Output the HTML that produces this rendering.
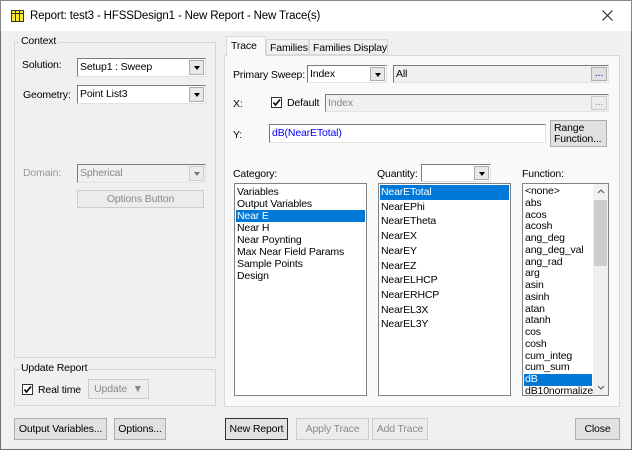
<!DOCTYPE html><html><head><style>
*{box-sizing:border-box;margin:0;padding:0}
body{width:632px;height:450px;background:#f0f0f0;font:10.5px "Liberation Sans",sans-serif;letter-spacing:-0.15px;color:#000;position:relative;overflow:hidden}
.a{position:absolute;white-space:nowrap}
.tb{position:absolute;left:0;top:0;width:632px;height:31px;background:#fff;border:1px solid #888;border-bottom:none}
.win{position:absolute;left:0;top:0;width:632px;height:450px;border:1px solid #707070;border-top:none}
.grp{position:absolute;border:1px solid #d5d5d5}
.grp>span{position:absolute;top:-8px;left:4px;background:#f0f0f0;padding:0 2px}
.in{position:absolute;background:#fff;border:1px solid #7a7a7a;border-right-color:#e3e3e3;border-bottom-color:#e3e3e3;padding:2px 2px;line-height:12px;white-space:nowrap}
.dis{background:#f0f0f0;color:#888}
.dd{position:absolute;right:1px;top:1px;bottom:1px;width:15px;background:#e8e8e8;border:1px solid #adadad}
.dd:after{content:"";position:absolute;left:4px;top:5px;border:3px solid transparent;border-top:4px solid #000}
.btn{position:absolute;background:#e1e1e1;border:1px solid #adadad;text-align:center;line-height:20px;white-space:nowrap}
.btn.d{color:#8a8a8a;background:#ececec;border-color:#ccc}
.sel{background:#0078d7;color:#fff}
.list{position:absolute;background:#fff;border:1px solid #828282;overflow:hidden;padding:1px;white-space:nowrap}
.list div{padding-left:1px}
</style></head><body>
<div class="win"></div>
<div class="tb"></div>
<svg class="a" style="left:11px;top:10px" width="13" height="12"><rect x="0.5" y="0.5" width="12" height="11" fill="#f8e830" stroke="#333"/><path d="M0 3.5H13M4.5 0V12M8.5 0V12" stroke="#333"/></svg>
<div class="a" style="left:30px;top:10px;font-size:11.5px">Report: test3 - HFSSDesign1 - New Report - New Trace(s)</div>
<svg class="a" style="left:602px;top:10px" width="11" height="11"><path d="M0.5 0.5L10.5 10.5M10.5 0.5L0.5 10.5" stroke="#222" stroke-width="1.1"/></svg>

<div class="grp" style="left:14px;top:42px;width:202px;height:316px"><span>Context</span></div>
<div class="a" style="left:22px;top:59px">Solution:</div>
<div class="in" style="left:77px;top:58px;width:129px;height:19px">Setup1 : Sweep<div class="dd"></div></div>
<div class="a" style="left:23px;top:89px">Geometry:</div>
<div class="in" style="left:77px;top:85px;width:129px;height:19px">Point List3<div class="dd"></div></div>
<div class="a" style="left:23px;top:167px;color:#999">Domain:</div>
<div class="in dis" style="left:77px;top:164px;width:129px;height:19px">Spherical<div class="dd" style="opacity:.5"></div></div>
<div class="btn d" style="left:77px;top:190px;width:127px;height:18px;line-height:16px">Options Button</div>

<div class="grp" style="left:14px;top:369px;width:202px;height:37px"><span>Update Report</span></div>
<div class="a" style="left:22px;top:384px;width:11px;height:11px;border:1px solid #333;background:#fff"><svg width="9" height="9" style="position:absolute;left:0;top:0"><path d="M1.5 4.5L3.5 7L8 1.5" stroke="#000" stroke-width="1.6" fill="none"/></svg></div>
<div class="a" style="left:38px;top:384px">Real time</div>
<div class="btn d" style="left:88px;top:379px;width:61px;height:20px;line-height:18px">Update &nbsp;&#9660;</div>
<div class="btn" style="left:14px;top:418px;width:93px;height:22px">Output Variables...</div>
<div class="btn" style="left:114px;top:418px;width:52px;height:22px">Options...</div>

<div class="a" style="left:224px;top:55px;width:396px;height:352px;border:1px solid #d9d9d9;background:#f9f9f9"></div>
<div class="a" style="left:226px;top:36px;width:40px;height:20px;border:1px solid #d9d9d9;border-bottom:none;background:#f9f9f9;padding:3px 4px">Trace</div>
<div class="a" style="left:266px;top:39px;width:43px;height:16px;border:1px solid #d9d9d9;background:#f0f0f0;padding:2px 3px">Families</div>
<div class="a" style="left:309px;top:39px;width:79px;height:16px;border:1px solid #d9d9d9;background:#f0f0f0;padding:2px 3px">Families Display</div>

<div class="a" style="left:233px;top:69px">Primary Sweep:</div>
<div class="in" style="left:307px;top:65px;width:80px;height:18px">Index<div class="dd"></div></div>
<div class="in dis" style="left:393px;top:65px;width:216px;height:18px;color:#000">All<div class="btn" style="right:1px;top:1px;width:16px;height:14px;line-height:10px;color:#00f">...</div></div>
<div class="a" style="left:233px;top:98px">X:</div>
<div class="a" style="left:271px;top:97px;width:11px;height:11px;border:1px solid #333;background:#fff"><svg width="9" height="9" style="position:absolute;left:0;top:0"><path d="M1.5 4.5L3.5 7L8 1.5" stroke="#000" stroke-width="1.6" fill="none"/></svg></div>
<div class="a" style="left:287px;top:97px">Default</div>
<div class="in dis" style="left:325px;top:94px;width:284px;height:18px">Index<div class="btn d" style="right:1px;top:1px;width:16px;height:14px;line-height:10px">...</div></div>
<div class="a" style="left:233px;top:129px">Y:</div>
<div class="in" style="left:269px;top:124px;width:277px;height:19px;color:#00f">dB(NearETotal)</div>
<div class="btn" style="left:550px;top:120px;width:57px;height:27px;line-height:11px;text-align:left;padding:2px 3px">Range<br>Function...</div>

<div class="a" style="left:233px;top:168px">Category:</div>
<div class="list" style="left:234px;top:183px;width:133px;height:213px;line-height:12px;padding-top:2px"><div>Variables</div><div>Output Variables</div><div class="sel">Near E</div><div>Near H</div><div>Near Poynting</div><div>Max Near Field Params</div><div>Sample Points</div><div>Design</div></div>
<div class="a" style="left:377px;top:168px">Quantity:</div>
<div class="in" style="left:421px;top:164px;width:70px;height:18px"><div class="dd"></div></div>
<div class="list" style="left:378px;top:183px;width:133px;height:213px;line-height:14.7px"><div class="sel">NearETotal</div><div>NearEPhi</div><div>NearETheta</div><div>NearEX</div><div>NearEY</div><div>NearEZ</div><div>NearELHCP</div><div>NearERHCP</div><div>NearEL3X</div><div>NearEL3Y</div></div>
<div class="a" style="left:522px;top:168px">Function:</div>
<div class="list" style="left:522px;top:183px;width:87px;height:213px;line-height:11.75px;padding-top:2px;padding-right:16px"><div>&lt;none&gt;</div><div>abs</div><div>acos</div><div>acosh</div><div>ang_deg</div><div>ang_deg_val</div><div>ang_rad</div><div>arg</div><div>asin</div><div>asinh</div><div>atan</div><div>atanh</div><div>cos</div><div>cosh</div><div>cum_integ</div><div>cum_sum</div><div class="sel">dB</div><div>dB10normalize</div>
<div style="position:absolute;right:0;top:0;width:15px;height:211px;background:#f0f0f0"></div>
<div style="position:absolute;right:1px;top:16px;width:13px;height:66px;background:#cdcdcd"></div>
<svg style="position:absolute;right:3px;top:5px" width="8" height="5"><path d="M1 4L4 1L7 4" stroke="#555" fill="none"/></svg>
<svg style="position:absolute;right:3px;bottom:5px" width="8" height="5"><path d="M1 1L4 4L7 1" stroke="#555" fill="none"/></svg></div>

<div class="btn" style="left:225px;top:418px;width:63px;height:22px;border-color:#333">New Report</div>
<div class="btn d" style="left:296px;top:418px;width:73px;height:22px">Apply Trace</div>
<div class="btn d" style="left:372px;top:418px;width:56px;height:22px">Add Trace</div>
<div class="btn" style="left:575px;top:418px;width:45px;height:22px">Close</div>
</body></html>
